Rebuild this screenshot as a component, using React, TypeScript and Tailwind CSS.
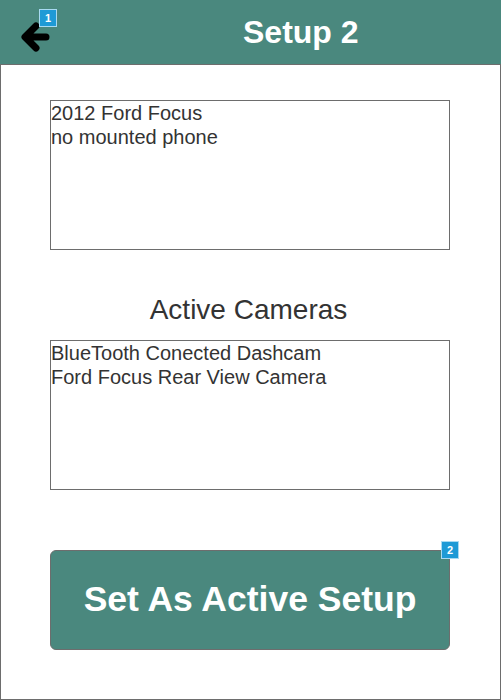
const Badge = ({ n, className }: { n: string; className: string }) => (
  <div
    className={`absolute flex h-[18px] w-[18px] items-center justify-center border border-[#a9daf2] bg-[#1e9ad6] text-[11px] font-bold leading-none text-white ${className}`}
  >
    {n}
  </div>
);

const InfoBox = ({ lines }: { lines: string[] }) => (
  <div className="ml-[49px] mr-[50px] h-[150px] border border-[#6d6d6d] text-[20px] leading-[24px] text-[#333]">
    {lines.map((l) => (
      <div key={l}>{l}</div>
    ))}
  </div>
);

export default function App() {
  return (
    <div className="relative h-[700px] w-[501px] border border-[#6d6d6d] bg-white font-['Liberation_Sans',Arial,sans-serif]">
      <header className="relative -mx-px -mt-px flex h-[65px] items-center border-b border-[#6d6d6d] bg-[#4a887e]">
        <svg width="56" height="56" viewBox="0 0 56 56" className="ml-[1px] mt-[1px]">
          <path
            d="M45 32 H25 M35 21 L24 32 L35 43"
            stroke="#000"
            strokeWidth="7"
            fill="none"
            strokeLinecap="round"
            strokeLinejoin="round"
          />
        </svg>
        <Badge n="1" className="left-[39px] top-[9px]" />
        <h1 className="ml-[186px] text-[32px] font-bold text-white">Setup 2</h1>
      </header>

      <div className="pt-[35px]">
        <InfoBox lines={["2012 Ford Focus", "no mounted phone"]} />
        <h2 className="mt-[44px] mb-[14px] pr-[4px] text-center text-[28px] leading-[32px] text-[#333]">
          Active Cameras
        </h2>
        <InfoBox lines={["BlueTooth Conected Dashcam", "Ford Focus Rear View Camera"]} />
        <div className="relative ml-[49px] mr-[50px] mt-[60px]">
          <button className="flex h-[100px] w-full items-center justify-center rounded-md border border-[#6d6d6d] bg-[#4a887e] text-[35.5px] font-bold text-white">
            Set As Active Setup
          </button>
          <Badge n="2" className="right-[-9px] top-[-9px]" />
        </div>
      </div>
    </div>
  );
}
